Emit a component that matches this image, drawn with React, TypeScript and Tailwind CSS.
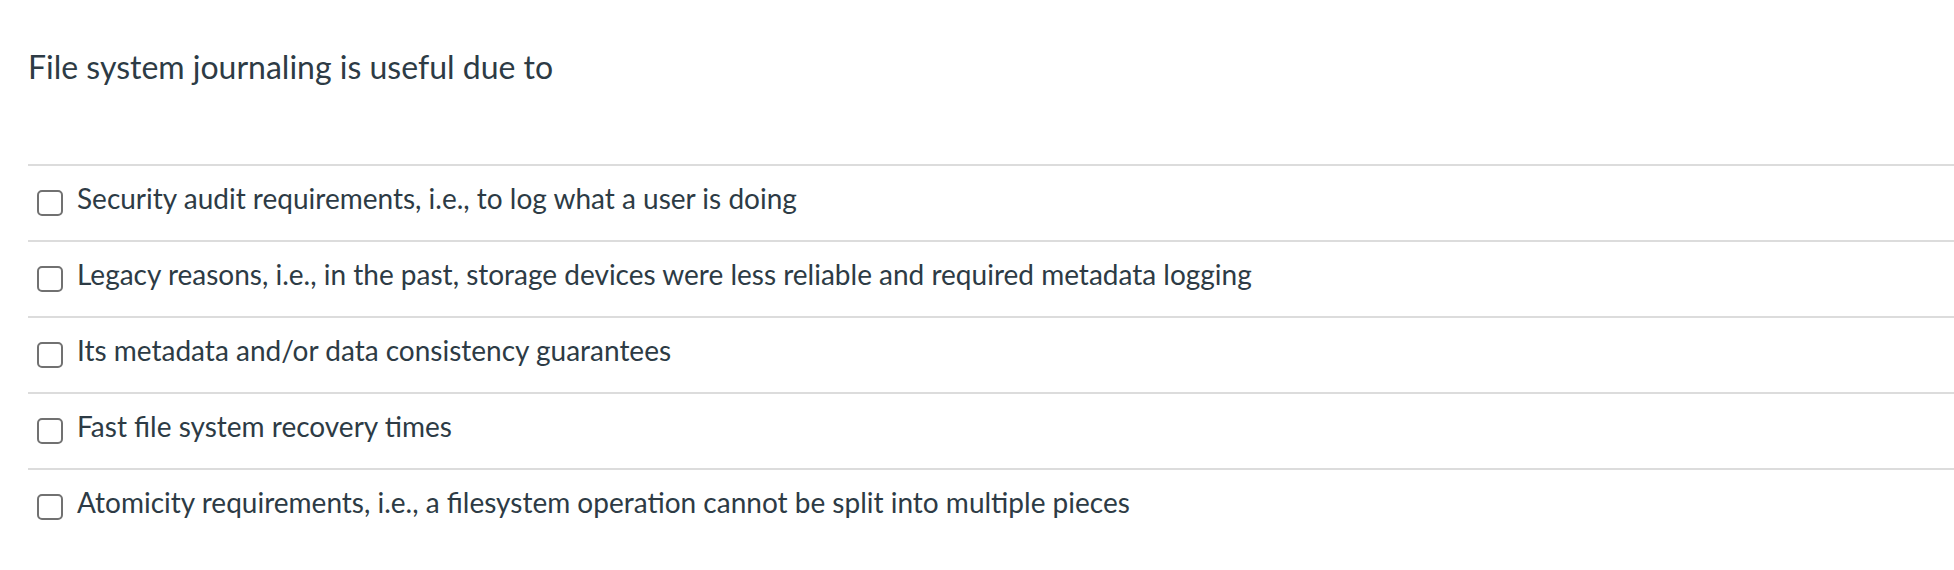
import React from 'react';

const answers = [
    'Security audit requirements, i.e., to log what a user is doing',
    'Legacy reasons, i.e., in the past, storage devices were less reliable and required metadata logging',
    'Its metadata and/or data consistency guarantees',
    'Fast file system recovery times',
    'Atomicity requirements, i.e., a filesystem operation cannot be split into multiple pieces',
];

export default function App() {
    return (
        <div className="min-h-[570px] bg-white pl-[28px] text-[#2d3b45] font-['Lato','Liberation_Sans',sans-serif]">
            <div className="pt-[48px] pb-[78px]">
                <p className="text-[32px] leading-[38px]">File system journaling is useful due to</p>
            </div>

            <div className="flex flex-col">
                {answers.map((text) => (
                    <label
                        key={text}
                        className="flex items-start border-t-2 border-[#dcdcdc] pt-[16px] pb-[24px] pl-[9px]"
                    >
                        <span className="mt-[8px] h-[26px] w-[26px] shrink-0 rounded-[5px] border-2 border-[#717171] bg-white" />
                        <span className="ml-[14px] text-[28px] leading-[32px]">{text}</span>
                    </label>
                ))}
            </div>
        </div>
    );
}
